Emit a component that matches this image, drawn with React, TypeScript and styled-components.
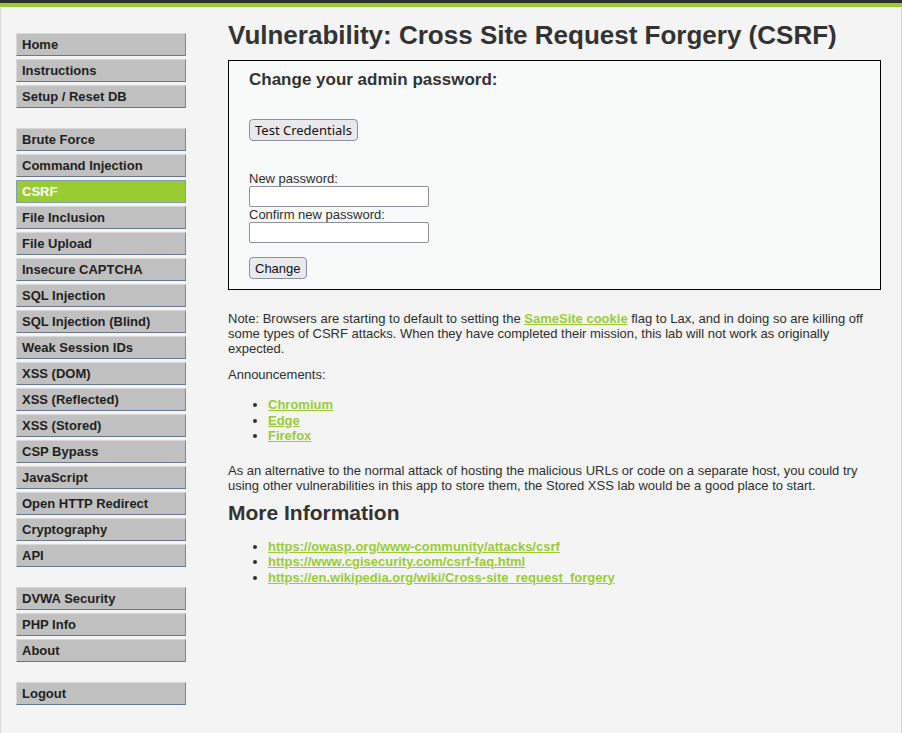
import React from "react";
import styled, { createGlobalStyle } from "styled-components";

const Global = createGlobalStyle`
  html, body { margin: 0; padding: 0; }
  body {
    background: #f4f4f4;
    font-family: "Liberation Sans", Arial, sans-serif;
    font-size: 13px;
    color: #2f2f2f;
  }
`;

const Page = styled.div`
  width: 902px;
  min-height: 733px;
  display: flex;
  flex-direction: column;
`;

const Header = styled.div`
  height: 3px;
  background: #2f2f2f;
  border-bottom: 4px solid #99cc33;
`;

const Frame = styled.div`
  flex: 1;
  display: flex;
  border-left: 1px solid #dcdcdc;
  border-right: 1px solid #dcdcdc;
  background: #f4f4f4;
`;

const Menu = styled.nav`
  width: 170px;
  padding: 26px 0 0 15px;
  flex-shrink: 0;
`;

const MenuGroup = styled.ul`
  list-style: none;
  margin: 0 0 20px 0;
  padding: 0;
  display: flex;
  flex-direction: column;
  gap: 3px;
`;

const MenuItem = styled.li<{ $selected?: boolean }>`
  box-sizing: border-box;
  height: 23px;
  padding: 0 0 0 5px;
  display: flex;
  align-items: center;
  font-weight: bold;
  font-size: 13px;
  background: ${(p) => (p.$selected ? "#99cc33" : "#c0c0c0")};
  color: ${(p) => (p.$selected ? "#ffffff" : "#1f1f1f")};
  border-top: 1px solid #d8d8d8;
  border-left: 1px solid #d8d8d8;
  border-right: 1px solid #7d8796;
  border-bottom: 1px solid #6a7689;
  ${(p) => (p.$selected ? "border: 1px solid #8a9ab0;" : "")}
`;

const Main = styled.main`
  flex: 1;
  padding: 0 20px 0 42px;
`;

const Title = styled.h1`
  margin: 13px 0 9px 0;
  font-size: 26px;
  font-weight: bold;
  color: #333333;
`;

const CodeArea = styled.div`
  border: 1px solid #000;
  background: #f8f9f9;
  padding: 9px 20px 10px 20px;
`;

const AreaTitle = styled.h3`
  margin: 0 0 29px 0;
  font-size: 17px;
  font-weight: bold;
  color: #333333;
`;

const Button = styled.button<{ $native?: boolean }>`
  font-family: ${(p) => (p.$native ? '"Noto Sans", "DejaVu Sans", sans-serif' : '"Liberation Sans", Arial, sans-serif')};
  font-size: 13px;
  color: #111;
  background: #e9e9ed;
  border: 1px solid #8f8f9d;
  border-radius: 4px;
  padding: 1px 5px;
  height: 22px;
`;

const Form = styled.form`
  display: flex;
  flex-direction: column;
  align-items: flex-start;
  margin-top: 30px;
`;

const Label = styled.label`
  font-size: 13px;
  line-height: 15px;
`;

const Input = styled.input`
  box-sizing: border-box;
  width: 180px;
  height: 21px;
  border: 1px solid #8f8f9d;
  border-radius: 2px;
  background: #fff;
  margin: 0;
`;

const SubmitRow = styled.div`
  margin-top: 14px;
`;

const Para = styled.p<{ $top?: number; $bottom?: number }>`
  margin: ${(p) => p.$top ?? 13}px 0 ${(p) => p.$bottom ?? 13}px 0;
  line-height: 15px;
`;

const Link = styled.a`
  color: #99cc33;
  font-weight: bold;
  text-decoration: underline;
`;

const List = styled.ul<{ $top?: number }>`
  margin: ${(p) => p.$top ?? 13}px 0 13px 0;
  padding-left: 40px;
  line-height: 15.5px;
`;

const SubTitle = styled.h2`
  margin: 0;
  font-size: 21px;
  font-weight: bold;
  color: #333333;
`;

const groups: string[][] = [
  ["Home", "Instructions", "Setup / Reset DB"],
  [
    "Brute Force",
    "Command Injection",
    "CSRF",
    "File Inclusion",
    "File Upload",
    "Insecure CAPTCHA",
    "SQL Injection",
    "SQL Injection (Blind)",
    "Weak Session IDs",
    "XSS (DOM)",
    "XSS (Reflected)",
    "XSS (Stored)",
    "CSP Bypass",
    "JavaScript",
    "Open HTTP Redirect",
    "Cryptography",
    "API",
  ],
  ["DVWA Security", "PHP Info", "About"],
  ["Logout"],
];

export default function App() {
  return (
    <>
      <Global />
      <Page>
        <Header />
        <Frame>
          <Menu>
            {groups.map((g, i) => (
              <MenuGroup key={i}>
                {g.map((item) => (
                  <MenuItem key={item} $selected={item === "CSRF"}>
                    {item}
                  </MenuItem>
                ))}
              </MenuGroup>
            ))}
          </Menu>
          <Main>
            <Title>Vulnerability: Cross Site Request Forgery (CSRF)</Title>
            <CodeArea>
              <AreaTitle>Change your admin password:</AreaTitle>
              <Button $native type="button">Test Credentials</Button>
              <Form onSubmit={(e) => e.preventDefault()}>
                <Label>New password:</Label>
                <Input type="password" />
                <Label>Confirm new password:</Label>
                <Input type="password" />
                <SubmitRow>
                  <Button type="submit">Change</Button>
                </SubmitRow>
              </Form>
            </CodeArea>
            <Para $top={21} $bottom={11}>
              Note: Browsers are starting to default to setting the{" "}
              <Link href="#">SameSite cookie</Link> flag to Lax, and in doing so are killing off
              some types of CSRF attacks. When they have completed their mission, this lab will
              not work as originally expected.
            </Para>
            <Para $top={11}>Announcements:</Para>
            <List $top={15}>
              <li><Link href="#">Chromium</Link></li>
              <li><Link href="#">Edge</Link></li>
              <li><Link href="#">Firefox</Link></li>
            </List>
            <Para $top={19} $bottom={8}>
              As an alternative to the normal attack of hosting the malicious URLs or code on a
              separate host, you could try using other vulnerabilities in this app to store them,
              the Stored XSS lab would be a good place to start.
            </Para>
            <SubTitle>More Information</SubTitle>
            <List $top={14}>
              <li><Link href="#">https://owasp.org/www-community/attacks/csrf</Link></li>
              <li><Link href="#">https://www.cgisecurity.com/csrf-faq.html</Link></li>
              <li><Link href="#">https://en.wikipedia.org/wiki/Cross-site_request_forgery</Link></li>
            </List>
          </Main>
        </Frame>
      </Page>
    </>
  );
}
